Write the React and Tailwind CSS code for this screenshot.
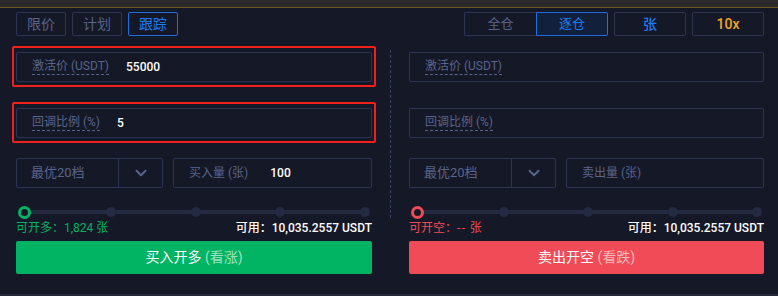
import { ChevronDown } from 'lucide-react';

const font = { fontFamily: '"Roboto", "Noto Sans CJK SC", sans-serif' };

function Field({ label, value, boxed }) {
  return (
    <div className="relative h-[30px] border border-[#2c3354] rounded-[2px] flex items-center px-[15px] text-[12px]">
      {boxed && (
        <div className="absolute -left-[5px] -right-[5px] -top-[7px] -bottom-[6px] border-2 border-[#f0201c] rounded-[2px]" />
      )}
      <span className="text-[#59648c] border-b border-dashed border-[#59648c] leading-[15px]">{label}</span>
      {value && <span className="ml-[17px] text-white font-medium">{value}</span>}
    </div>
  );
}

function Slider({ color }) {
  return (
    <div className="relative h-[14px] flex items-center mx-[2px]">
      <div className="absolute left-[4px] right-[4px] h-[4px] bg-[#252a43]" />
      <div className={`relative w-[13px] h-[13px] rounded-full border-[3px] bg-[#151826] ${color}`} />
      <div className="flex-1" />
      <div className="relative w-[10px] h-[10px] rounded-full bg-[#252a43]" />
      <div className="flex-1" />
      <div className="relative w-[10px] h-[10px] rounded-full bg-[#252a43]" />
      <div className="flex-1" />
      <div className="relative w-[10px] h-[10px] rounded-full bg-[#252a43]" />
      <div className="flex-1" />
      <div className="relative w-[10px] h-[10px] rounded-full bg-[#252a43]" />
    </div>
  );
}

function Side({ buy }) {
  return (
    <div className="flex flex-col">
      <div className="mt-[16px]">
        <Field label="激活价 (USDT)" value={buy ? '55000' : null} boxed={buy} />
      </div>
      <div className="mt-[26px]">
        <Field label="回调比例 (%)" value={buy ? '5' : null} boxed={buy} />
      </div>
      <div className="flex gap-[10px] mt-[20px]">
        <div className="w-[147px] h-[30px] border border-[#2c3354] rounded-[2px] flex text-[13px] text-[#59648c]">
          <div className="w-[102px] flex items-center pl-[14px] border-r border-[#2c3354]">最优20档</div>
          <div className="flex-1 flex items-center justify-center">
            <ChevronDown size={18} strokeWidth={2.5} className="text-[#59648c]" />
          </div>
        </div>
        <div className="flex-1 h-[30px] border border-[#2c3354] rounded-[2px] flex items-center pl-[15px] text-[12px]">
          <span className="text-[#59648c]">{buy ? '买入量 (张)' : '卖出量 (张)'}</span>
          {buy && <span className="ml-[22px] text-white font-medium">100</span>}
        </div>
      </div>
      <div className="mt-[17px]">
        <Slider color={buy ? 'border-[#00b464]' : 'border-[#f04b56]'} />
      </div>
      <div className="flex justify-between text-[12px] leading-[16px] mt-[1px]">
        <span className={buy ? 'text-[#00b464]' : 'text-[#f04b56]'}>
          {buy ? '可开多：1,824 张' : <>可开空：<span className="tracking-[1.5px]">--</span> 张</>}
        </span>
        <span className="text-white font-medium">可用：10,035.2557 USDT</span>
      </div>
      <button
        className={`mt-[5px] h-[33px] rounded-[2px] text-[14px] text-white ${buy ? 'bg-[#00b464]' : 'bg-[#f04b56]'}`}
      >
        {buy ? '买入开多' : '卖出开空'}{' '}
        <span className={buy ? 'text-[#9de3bf]' : 'text-[#fbb9bd]'}>{buy ? '(看涨)' : '(看跌)'}</span>
      </button>
    </div>
  );
}

export default function App() {
  return (
    <div className="w-[778px] h-[296px] bg-[#151826] flex flex-col overflow-hidden" style={font}>
      <div className="h-[8px] shrink-0 bg-[#2b2a2c] border-b border-[#6e5624]" />
      <div className="flex-1 pl-[16px] pr-[14px] pt-[4px]">
        <div className="flex justify-between">
          <div className="flex gap-[6px] text-[14px]">
            <button className="w-[50px] h-[24px] border border-[#2c3354] rounded-[2px] text-[#59648c]">限价</button>
            <button className="w-[50px] h-[24px] border border-[#2c3354] rounded-[2px] text-[#59648c]">计划</button>
            <button className="w-[50px] h-[24px] border border-[#1d6fe0] rounded-[2px] text-[#1d7cf2]">跟踪</button>
          </div>
          <div className="flex gap-[6px] text-[14px]">
            <div className="flex">
              <button className="w-[72px] h-[24px] border border-r-0 border-[#2c3354] rounded-l-[2px] text-[#59648c] text-[13px]">全仓</button>
              <button className="w-[72px] h-[24px] border border-[#1d6fe0] bg-[#13203c] rounded-r-[2px] text-[#1d7cf2] text-[13px]">逐仓</button>
            </div>
            <button className="w-[72px] h-[24px] border border-[#2c3354] rounded-[2px] text-[#1d7cf2] font-medium">张</button>
            <button className="w-[72px] h-[24px] border border-[#2c3354] rounded-[2px] text-[#f5a623] font-medium">10x</button>
          </div>
        </div>
        <div className="flex">
          <div className="w-[356px]">
            <Side buy />
          </div>
          <div className="w-[37px] flex justify-center pt-[14px]">
            <div className="h-[168px] border-l border-dashed border-[#3a4266]" />
          </div>
          <div className="w-[355px]">
            <Side />
          </div>
        </div>
      </div>
      <div className="h-[2px] shrink-0 bg-[#22273a]" />
    </div>
  );
}
